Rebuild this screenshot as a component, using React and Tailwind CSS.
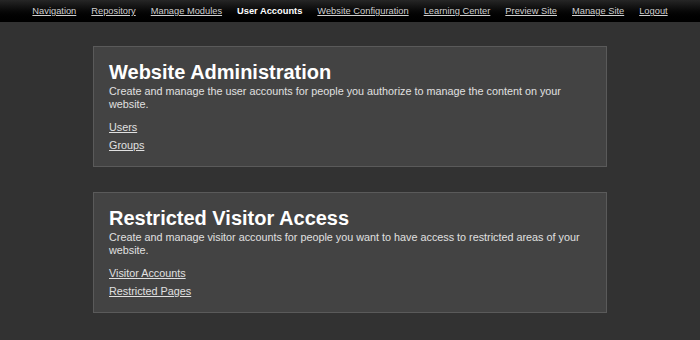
export default function App() {
  const nav = [
    "Navigation",
    "Repository",
    "Manage Modules",
    "User Accounts",
    "Website Configuration",
    "Learning Center",
    "Preview Site",
    "Manage Site",
    "Logout",
  ];
  const sections = [
    {
      title: "Website Administration",
      desc: "Create and manage the user accounts for people you authorize to manage the content on your website.",
      links: ["Users", "Groups"],
    },
    {
      title: "Restricted Visitor Access",
      desc: "Create and manage visitor accounts for people you want to have access to restricted areas of your website.",
      links: ["Visitor Accounts", "Restricted Pages"],
    },
  ];
  return (
    <div
      className="w-[700px] h-[340px] bg-[#323232] overflow-hidden"
      style={{ fontFamily: '"Liberation Sans", Arial, sans-serif' }}
    >
      <div className="h-[22px] bg-gradient-to-b from-[#262626] to-[#000000] flex items-center justify-center gap-[15px] text-[9.3px] leading-[22px]">
        {nav.map((n) =>
          n === "User Accounts" ? (
            <span key={n} className="font-bold text-white">
              {n}
            </span>
          ) : (
            <a key={n} href="#" className="text-[#d0d0d0] underline">
              {n}
            </a>
          )
        )}
      </div>
      <div className="flex flex-col items-center gap-[25px] pt-[24px]">
        {sections.map((s) => (
          <div
            key={s.title}
            className="w-[514px] h-[121px] border border-[#5a5a5a] bg-[#434343] pl-[15px] pr-[12px] pt-[13px]"
          >
            <h2 className="text-[20px] leading-[24px] font-bold text-white">
              {s.title}
            </h2>
            <p className="text-[10.8px] leading-[12.5px] text-[#e0e0e0] mt-[1px]">
              {s.desc}
            </p>
            <div className="mt-[8px] flex flex-col">
              {s.links.map((l) => (
                <a
                  key={l}
                  href="#"
                  className="text-[10.8px] leading-[18px] text-[#e0e0e0] underline self-start"
                >
                  {l}
                </a>
              ))}
            </div>
          </div>
        ))}
      </div>
    </div>
  );
}
